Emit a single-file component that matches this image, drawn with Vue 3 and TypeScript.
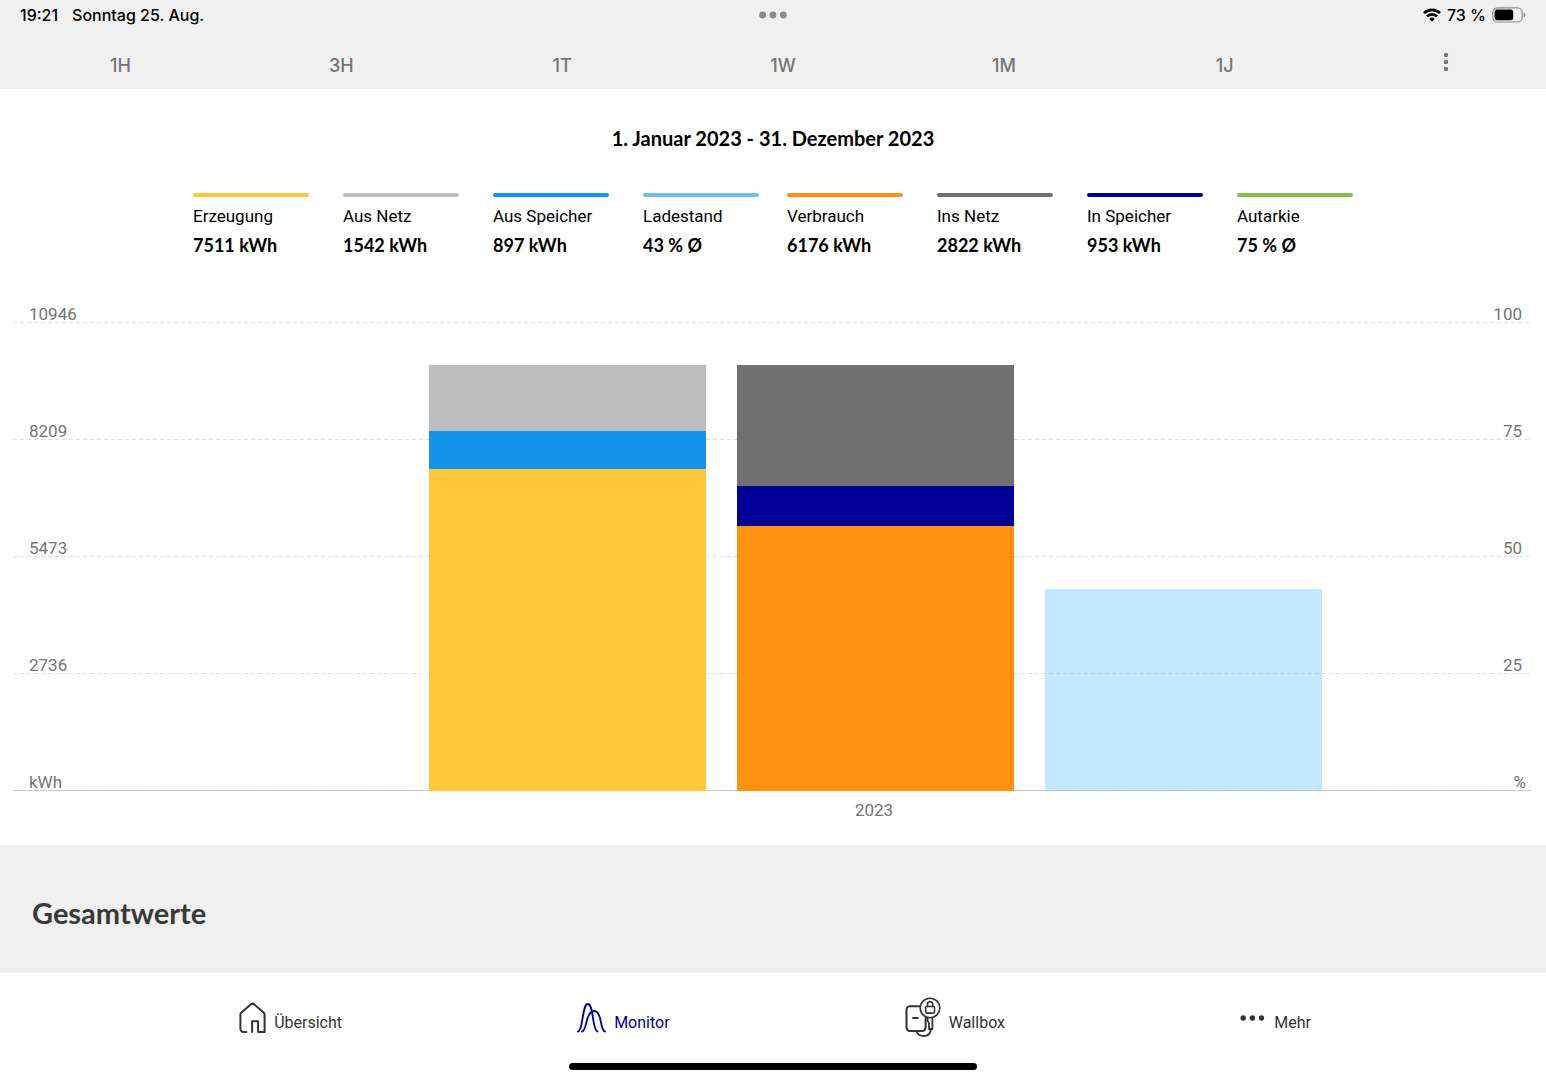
<script setup lang="ts">
interface Series {
  label: string
  value: number
  unit: string
  color: string
}

const axisMax = 10946

const sources: Series[] = [
  { label: 'Erzeugung', value: 7511, unit: 'kWh', color: '#ffc83b' },
  { label: 'Aus Netz', value: 1542, unit: 'kWh', color: '#bdbdbd' },
  { label: 'Aus Speicher', value: 897, unit: 'kWh', color: '#1294eb' },
  { label: 'Ladestand', value: 43, unit: '% Ø', color: '#6cbdf8' },
]

const sinks: Series[] = [
  { label: 'Verbrauch', value: 6176, unit: 'kWh', color: '#ff9010' },
  { label: 'Ins Netz', value: 2822, unit: 'kWh', color: '#707070' },
  { label: 'In Speicher', value: 953, unit: 'kWh', color: '#000096' },
  { label: 'Autarkie', value: 75, unit: '% Ø', color: '#86bd4b' },
]

const ranges = ['1H', '3H', '1T', '1W', '1M', '1J']

const ticks = [
  { left: '10946', right: '100' },
  { left: '8209', right: '75' },
  { left: '5473', right: '50' },
  { left: '2736', right: '25' },
  { left: 'kWh', right: '%' },
]

const share = (value: number, max: number): string => `${(value / max) * 100}%`

// Segments run from the top of the stack to the bottom.
const stack = (s: Series[]) =>
  [s[1], s[2], s[0]].map((e) => ({ color: e.color, height: share(e.value, axisMax) }))

const bars = [
  stack(sources),
  stack(sinks),
  [{ color: 'rgba(108, 197, 255, 0.4)', height: share(43, 100) }],
]
</script>

<template>
  <div class="app">
    <header class="top">
      <div class="status">
        <div class="status-side">
          <span>19:21</span>
          <span>Sonntag 25. Aug.</span>
        </div>
        <svg class="multitask" width="28" height="8" viewBox="0 0 28 8" fill="#8a8a8a" aria-hidden="true">
          <circle cx="3.6" cy="4" r="3.4" /><circle cx="14" cy="4" r="3.4" /><circle cx="24.4" cy="4" r="3.4" />
        </svg>
        <div class="status-side status-end">
          <svg width="18" height="14" viewBox="0 0 18 14" fill="none" stroke="#000" stroke-width="2.7" aria-hidden="true">
            <path d="M1 5.1a11.3 11.3 0 0 1 16 0" />
            <path d="M3.9 8.400a7.200 7.200 0 0 1 10.200 0" />
            <path d="M9 13.6 6.300 10.900a3.800 3.800 0 0 1 5.400 0Z" fill="#000" stroke="none" />
          </svg>
          <span>73 %</span>
          <svg width="34" height="16" viewBox="0 0 34 16" aria-hidden="true">
            <rect x=".8" y=".8" width="29.4" height="14.2" rx="4.6" fill="none" stroke="#8c8c8c" stroke-width="1.2" />
            <rect x="2.6" y="2.6" width="18.6" height="10.6" rx="2.6" />
            <path d="M31.7 5.4c2.2.8 2.2 4.2 0 5Z" fill="#8c8c8c" />
          </svg>
        </div>
      </div>
      <nav class="ranges" aria-label="Zeitraum">
        <button v-for="r in ranges" :key="r" type="button">{{ r }}</button>
        <button type="button" class="more" aria-label="Weitere Optionen">
          <svg width="6" height="20" viewBox="0 0 6 20" fill="#757575" aria-hidden="true">
            <circle cx="3" cy="3" r="2.2" /><circle cx="3" cy="10" r="2.2" /><circle cx="3" cy="17" r="2.2" />
          </svg>
        </button>
      </nav>
    </header>

    <main>
      <section class="monitor">
        <h1>1. Januar 2023 - 31. Dezember 2023</h1>
        <div class="legend">
          <ul v-for="(group, i) in [sources, sinks]" :key="i">
            <li v-for="s in group" :key="s.label">
              <span class="swatch" :style="{ background: s.color }"></span>
              <span class="name">{{ s.label }}</span>
              <strong>{{ s.value }} {{ s.unit }}</strong>
            </li>
          </ul>
        </div>

        <div class="chart">
          <div class="grid">
            <div v-for="t in ticks" :key="t.left" class="row">
              <span>{{ t.left }}</span>
              <span>{{ t.right }}</span>
            </div>
          </div>
          <div class="bars">
            <div v-for="(bar, i) in bars" :key="i" class="bar">
              <div v-for="seg in bar" :key="seg.color" :style="{ height: seg.height, background: seg.color }"></div>
            </div>
          </div>
          <div class="year">2023</div>
        </div>
      </section>

      <section class="totals">
        <h2>Gesamtwerte</h2>
      </section>
    </main>

    <footer>
      <nav class="tabs" aria-label="Hauptnavigation">
        <a href="#uebersicht">
          <svg width="27" height="32" viewBox="0 0 27 32" fill="none" stroke="#333" stroke-width="2" stroke-linecap="round" stroke-linejoin="round" aria-hidden="true">
            <path d="M7.3 30H4.6A3.2 3.2 0 0 1 1.4 26.800V12.600a3 3 0 0 1 1-2.200L12 2.300a2.300 2.300 0 0 1 3 0l9.600 8.100a3 3 0 0 1 1 2.200V30h-6.500V19.200h-6V30" />
          </svg>
          <span>Übersicht</span>
        </a>
        <a href="#monitor" class="active" aria-current="page">
          <svg width="29" height="32" viewBox="0 0 29 32" fill="none" stroke="#000096" stroke-width="1.800" stroke-linecap="round" aria-hidden="true">
            <path d="M1 29.500C4 29 4.500 22 5.600 16 7 7.500 8 2 10.800 2s4 5.500 5.200 14c1 7 2 13 4.500 13.500" />
            <path d="M5 29.500c3-.5 3.500-6 5-11.500C11.600 12 13.400 9 17.200 9c3.600 0 5 3 6.200 8.500 1.300 6 1.600 11.500 4.600 12" />
          </svg>
          <span>Monitor</span>
        </a>
        <a href="#wallbox">
          <svg width="36" height="42" viewBox="0 0 36 42" fill="none" stroke="#333" stroke-width="1.800" stroke-linecap="round" stroke-linejoin="round" aria-hidden="true">
            <path d="M14.500 9.300H4.800A3.300 3.300 0 0 0 1.500 12.600v18a3.300 3.300 0 0 0 3.300 3.300h12.500a3.300 3.300 0 0 0 3.300-3.300V21" stroke-width="2" />
            <path d="M7.300 21h6.200" stroke-width="2" stroke-linecap="butt" />
            <circle cx="25" cy="11" r="9.800" stroke-width="1.600" />
            <rect x="20.700" y="9.500" width="8.800" height="6.600" rx="1" stroke-width="1.600" />
            <path d="M22.500 9.500V7.300a2.600 2.600 0 0 1 5.200 0v2.200" stroke-width="1.600" />
            <path d="M22.600 21v2.500c0 1.500 1.400 1.500 1.400 3v5.600h3.400V21.500" />
            <path d="M11.500 34.300c2 6.600 14 6.400 14.300-2" stroke-width="2" />
          </svg>
          <span>Wallbox</span>
        </a>
        <a href="#mehr">
          <svg width="26" height="32" viewBox="0 0 26 32" fill="#333" aria-hidden="true">
            <circle cx="3.200" cy="16" r="2.700" /><circle cx="12.400" cy="16" r="2.700" /><circle cx="21.500" cy="16" r="2.700" />
          </svg>
          <span>Mehr</span>
        </a>
      </nav>
      <div class="home-indicator"></div>
    </footer>
  </div>
</template>

<style>
body {
  margin: 0;
  background: #fff;
}
</style>

<style scoped>
.app {
  min-height: 100vh;
  display: flex;
  flex-direction: column;
  font-family: Roboto, sans-serif;
  color: #000;
}

.top,
.totals {
  background: #f0f0f0;
}

.status {
  display: flex;
  align-items: center;
  height: 30px;
  padding: 0 20px;
  font: 500 16px/30px Inter, sans-serif;
}

.status-side {
  display: flex;
  align-items: center;
  flex: 1;
  gap: 14px;
}

.status-end {
  justify-content: flex-end;
  gap: 6px;
}

.ranges {
  display: flex;
  height: 59px;
}

.ranges button {
  flex: 1;
  padding: 12px 0 0 20px;
  border: 0;
  background: none;
  color: #757575;
  font: 500 18px/24px Inter, sans-serif;
}

.ranges .more {
  padding-top: 5px;
}

.ranges svg {
  display: block;
  margin: 0 auto;
}

main {
  flex: 1;
  display: flex;
  flex-direction: column;
}

h1 {
  margin: 0;
  padding-top: 37px;
  text-align: center;
  font: 700 20px/24px Lato, sans-serif;
}

.legend {
  display: flex;
  justify-content: center;
  gap: 28px;
  padding-top: 43px;
}

.legend ul {
  display: flex;
  gap: 34px;
  margin: 0;
  padding: 0;
  list-style: none;
}

.legend li {
  display: flex;
  flex-direction: column;
  width: 116px;
}

.swatch {
  height: 4px;
  border-radius: 2px;
}

.name {
  margin-top: 8px;
  font-size: 17px;
  line-height: 22px;
}

.legend strong {
  margin-top: 6px;
  font: 700 18px/24px Lato, sans-serif;
}

.chart {
  display: grid;
  grid-template-rows: 22px 469px auto;
  padding: 43px 14px 24px 13px;
}

.grid {
  grid-area: 1 / 1 / 3 / 2;
  display: flex;
  flex-direction: column;
}

.row {
  flex: 1;
  display: flex;
  justify-content: space-between;
  align-items: flex-end;
  padding: 0 10px 0 16px;
  color: #757575;
  font-size: 17px;
  line-height: 18px;
  background: repeating-linear-gradient(90deg, #dcdcdc 0 4px, transparent 4px 7px) bottom / 100% 1px no-repeat;
}

.row:first-child {
  flex: 0 0 23px;
}

.row:last-child {
  padding-right: 6px;
  background-image: repeating-linear-gradient(90deg, #c4c4c4 0 5px, #dedede 5px 7px);
}

.bars {
  grid-area: 2 / 1;
  display: grid;
  grid-template-columns: repeat(3, 1fr);
  gap: 3.5%;
  padding: 0 13.8% 0 27.4%;
}

.bar {
  display: flex;
  flex-direction: column;
  justify-content: flex-end;
}

.year {
  padding: 8px 0 0 203px;
  text-align: center;
  color: #757575;
  font-size: 17px;
  line-height: 22px;
}

.totals {
  flex: 1;
  display: flex;
  align-items: center;
  padding: 0 32px;
}

h2 {
  margin: 0;
  padding-top: 8px;
  color: #383a3a;
  font: 700 29px/32px Lato, sans-serif;
}

.tabs {
  display: flex;
  justify-content: space-evenly;
  height: 90px;
  padding-left: 4px;
}

.tabs a {
  display: flex;
  align-items: center;
  gap: 8px;
  color: #333;
  font-size: 16px;
  line-height: 20px;
  text-decoration: none;
}

.tabs span {
  padding-top: 10px;
}

.tabs .active {
  color: #000096;
}

.home-indicator {
  width: 408px;
  max-width: 80%;
  height: 7px;
  margin: 0 auto 10px;
  border-radius: 4px;
  background: #000;
}
</style>
